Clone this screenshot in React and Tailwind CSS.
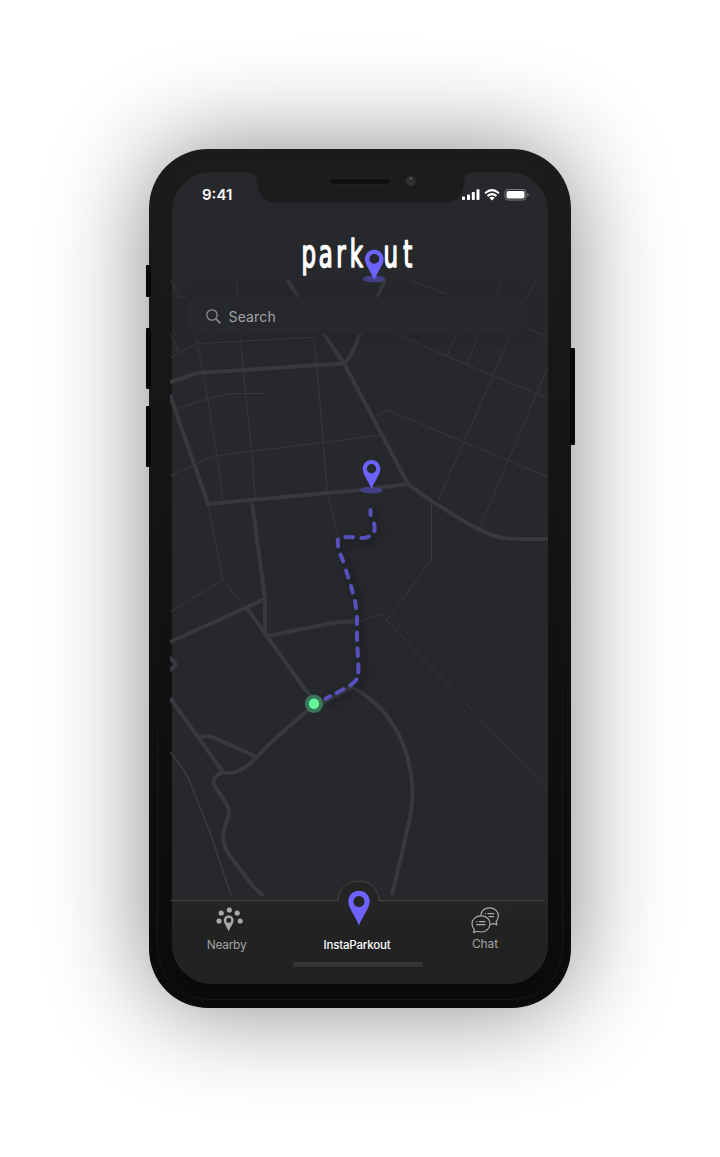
const thick = [
  "M170 382L198 373L344 363.5",
  "M287 280L344 363.5L408 484Q426 498 442 507.5Q484 535 503 538Q510 539 548 539",
  "M385 280L360 334C354 349 351 358 344 363.5",
  "M170 395L208 504L360 490L408 484",
  "M252 503L265 598V635",
  "M170 642L265 599",
  "M246 607L267 636L301 684Q308 693 313 699",
  "M267 636L327 624Q342 621 357 621.5",
  "M168 656L175 663Q176 665 174 667L168 671",
  "M170 698L223 772C232 776 244 770 257 757C271 741 287 728 307 711L351 688",
  "M200 737.5C206 735.500 212 736 217 739L257 757",
  "M223 772C214 776 211 781 216 788L226 803Q230 809 229 815C225 826 222 832 224 843Q225 850 233 860L253 886L263 896",
  "M348 685C387 704 412 742 412.5 795Q412 809 408 827L392 895",
];
const thin = [
  "M170 278L179 297H185",
  "M170 334L179 352",
  "M170 358L197 343.500L320 337",
  "M195 334L203 371L217 455L223 502",
  "M236.500 280L238 297L243 369L252 452L255 499",
  "M313 337L317 366L327 490L338 537",
  "M177 409Q220 392 244 393.500L264 393.500",
  "M170 476L214 456L360 438L380 435",
  "M412 281L454 297",
  "M397 334L447 356.500L548 398.500",
  "M502 281L495 297M535 281L526 301",
  "M456 334L447 356.500M479 334L466.500 364.500",
  "M511 334L438 501",
  "M548 367L480 527",
  "M528 329L548 337",
  "M375 417L387 410L548 477",
  "M431.500 503V560L387 620",
  "M357 622L381 614L450 687L548 790",
  "M208 505L223 580L245 608M223 580L170 612",
];

function Map() {
  return (
    <svg
      className="absolute top-[108px] -left-0.5"
      width="378"
      height="616"
      viewBox="170 280 378 616"
      fill="none"
    >
      <g stroke="#37383c" strokeWidth="1">
        {thin.map((d) => (
          <path key={d} d={d} />
        ))}
      </g>
      <path
        d="M170 752C182 766 190 779 193 790C201 809 210 832 216 850L231 895"
        stroke="#38393d"
        strokeWidth="1.8"
      />
      <g stroke="#38393d" strokeWidth="4" strokeLinejoin="round">
        {thick.map((d) => (
          <path key={d} d={d} />
        ))}
      </g>
      <path
        d="M370.500 510V515M374 523.500Q375.300 528 374.300 531M369 536.500Q365 538.300 361.500 538M353 537.200L345.500 537M338 539.500Q337.300 543 338.200 546.500M340.500 554.500L343.200 561.500M346 570.500L348.300 577.500M351 586L352.700 592.500M355 601L356 608M357 617V624M357 632.500V640M357.500 648.500L357.800 656M358.300 664.500V672.500M356.500 679.500Q353.500 683 350.500 685.300M343.500 689.300L336.500 693M330 696.300L325.500 698.700"
        stroke="#5750bd"
        strokeWidth="4"
        strokeLinecap="round"
        className="drop-shadow-[4px_4px_4px_rgba(0,0,0,0.45)]"
      />
      <circle cx="314" cy="703.700" r="9.200" fill="#39765a" />
      <circle cx="314" cy="703.700" r="5.200" fill="#61f797" />
      <ellipse cx="371.300" cy="490.200" rx="11.300" ry="3.300" fill="#453f87" />
      <path
        fill="#6c63ff"
        fillRule="evenodd"
        d="M371.500 460c-5 0-8.800 4-8.800 8.800 0 6 5.800 12.200 8.800 20.200 3-8 8.800-14.200 8.800-20.200 0-4.800-3.900-8.800-8.800-8.800Zm0 4a4.700 4.700 0 1 1 0 9.400 4.700 4.700 0 0 1 0-9.400Z"
      />
    </svg>
  );
}

function Notch() {
  return (
    <svg className="absolute -top-px left-[70px]" width="236" height="32" viewBox="242 171 236 32">
      <path
        fill="#1c1c1c"
        d="M242 171V172.500H249Q256 172.500 256.500 179C258 193 262 202.500 276 202.500H445C459 202.500 463 193 464.500 179Q465 172.500 472 172.500H478V171Z"
      />
      <rect x="329.500" y="178.500" width="61" height="6" rx="3" fill="#101010" stroke="#222" />
      <circle cx="410.800" cy="181.300" r="6.500" fill="#262626" stroke="#141414" />
      <circle cx="410.800" cy="181" r="4" fill="#333" />
      <circle cx="410.800" cy="178" r="1" fill="#686868" />
    </svg>
  );
}

function StatusIcons() {
  return (
    <svg width="68" height="14" viewBox="461 188 68 14" fill="#fff">
      <rect x="462" y="196.500" width="3" height="3.500" rx=".8" />
      <rect x="467" y="194.500" width="3" height="5.500" rx=".8" />
      <rect x="471.800" y="192" width="3" height="8" rx=".8" />
      <rect x="476.500" y="189.200" width="3" height="10.800" rx=".8" />
      <g fill="none" stroke="#fff" strokeWidth="2">
        <path d="M485 193.200Q492 187 499 193.200" />
        <path d="M487.500 196Q492 192.200 496.500 196" />
      </g>
      <path d="M489.300 197.700Q492 195.700 494.700 197.700L492 200.500Z" />
      <rect x="505" y="189.500" width="21" height="10.500" rx="3" fill="none" stroke="#77787a" />
      <rect x="506.500" y="191" width="18" height="7.500" rx="1.800" />
      <path d="M527.300 193v3.600q1.500-.6 1.500-1.800t-1.500-1.800Z" fill="#77787a" />
    </svg>
  );
}

function Logo() {
  return (
    <svg className="-mt-3 ml-[121px]" width="130" height="62" viewBox="293 222 130 62">
      <g
        fill="#fff"
        stroke="#fff"
        strokeWidth="1.700"
        strokeLinejoin="round"
        fontFamily="DejaVu Sans, sans-serif"
        fontSize="37"
      >
        <text transform="translate(301.500 267) scale(.62 1)" x="0 28 56 78">park</text>
        <text transform="translate(383.500 267) scale(.62 1)" x="0 32">ut</text>
      </g>
      <ellipse cx="374" cy="279" rx="11.300" ry="3.500" fill="#453f87" />
      <path
        fill="#6c63ff"
        fillRule="evenodd"
        d="M374.300 249.800c-5.200 0-9.300 4.200-9.300 9.300 0 6 6.300 13 9.300 21 3-8 9.300-15 9.300-21 0-5.100-4.100-9.300-9.300-9.300Zm0 4.200a4.900 4.900 0 1 1 0 9.800 4.900 4.900 0 0 1 0-9.800Z"
      />
    </svg>
  );
}

function SearchField() {
  return (
    <div className="relative ml-[14px] mt-[13px] flex h-[37px] w-[342px] items-center rounded-[10px] bg-[#27282c] pl-5 pt-0.5 shadow-[0_0_14px_rgba(30,31,34,0.55)]">
      <svg width="16" height="16" viewBox="0 0 16 16" fill="none" stroke="#8a8b8d" strokeWidth="1.300">
        <circle cx="6" cy="6" r="5.200" />
        <path d="M9.700 9.700l4.600 4.600" strokeWidth="1.700" />
      </svg>
      <span className="ml-[6.500px] font-['Inter',sans-serif] text-[14px] tracking-[0.15px] text-[#a2a3a5]">Search</span>
    </div>
  );
}

function NearbyIcon() {
  return (
    <svg width="28" height="26" viewBox="0 0 28 26" fill="#a9a9a9">
      <circle cx="3" cy="14" r="2.600" />
      <circle cx="5.200" cy="6" r="2.600" />
      <circle cx="13.300" cy="3" r="2.600" />
      <circle cx="21.200" cy="6" r="2.600" />
      <circle cx="24.200" cy="14" r="2.600" />
      <path
        fillRule="evenodd"
        d="M12.700 8.400c-2.800 0-4.900 2.200-4.900 4.900 0 3.400 3.200 6.600 4.900 11.200 1.700-4.600 4.900-7.800 4.900-11.200 0-2.700-2.100-4.900-4.900-4.900Zm0 2.300a2.500 2.500 0 1 1 0 5 2.500 2.500 0 0 1 0-5Z"
      />
    </svg>
  );
}

function ChatIcon() {
  return (
    <svg width="28" height="27" viewBox="0 0 28 27" fill="none" stroke="#a9a9a9" strokeWidth="1.200" strokeLinejoin="round">
      <path d="M9.700 8.300C10.500 3.600 14 .8 18.500 .8c5 0 8.800 3.400 8.800 8 0 2.600-1 4.500-2.200 5.700l.8 3.400-3.400-1.300-3.300.7" />
      <path d="M10 8.800c-5 0-9 3.500-9 8 0 2.400 1 4.300 2.300 5.700L2.500 25.600l3.600-1.300c1.300.5 2.500.7 3.900.7 5 0 9-3.600 9-8.200s-4-8-9-8Z" />
      <path d="M5.300 14.700h1.200m1.500 0h6.500m-9.200 3h9.200M14 6.700h1m1.500 0h6.500m-5.500 3h5.500" />
    </svg>
  );
}

function TabBar() {
  return (
    <nav className="relative h-[84px] rounded-b-[40px] bg-linear-to-b from-[#262626] via-[#222] via-30% to-[#212223] font-['Inter',sans-serif] text-[12px] leading-[14px] text-[#a3a3a3]">
      <svg className="absolute -top-5 -left-0.5" width="375" height="22" viewBox="170 880 375 22">
        <path d="M338 902V900.500C339 874.500 378 874.500 379 900.500V902Z" fill="#242424" />
        <path d="M170 900.500H338C339 874.500 378 874.500 379 900.500H545" fill="none" stroke="#444545" />
      </svg>
      <div className="relative flex pt-[7px]">
        <div className="flex w-[109px] flex-col items-center">
          <div className="pl-[7px]">
            <NearbyIcon />
          </div>
          <span className="mt-[5px] tracking-[-0.3px]">Nearby</span>
        </div>
        <div className="-mt-[17px] flex w-[152px] flex-col items-center">
          <svg className="ml-[3px]" width="22" height="36" viewBox="0 0 22 36">
            <path
              fill="#6c63ff"
              fillRule="evenodd"
              d="M11 .8C5 .8.300 5.600.300 11.300c0 7 7.200 14.500 10.700 24.500 3.500-10 10.700-17.500 10.700-24.500C21.700 5.600 17 .800 11 .800Zm0 5.200a5.500 5.500 0 1 1 0 11 5.500 5.500 0 0 1 0-11Z"
            />
          </svg>
          <span className="mt-3 text-[11.500px] font-medium tracking-[-0.2px] text-white">InstaParkout</span>
        </div>
        <div className="flex w-[104px] flex-col items-center">
          <ChatIcon />
          <span className="mt-[3px] tracking-[-0.1px]">Chat</span>
        </div>
      </div>
      <div className="absolute bottom-[17.500px] left-[120.500px] h-[5px] w-[130px] rounded-full bg-[#353535]" />
    </nav>
  );
}

export default function App() {
  return (
    <main className="flex h-[1157px] w-[720px] justify-center overflow-hidden bg-white pt-[149px]">
      <div className="relative h-[859px] w-[422px] rounded-[59px] bg-linear-to-b from-[#1c1c1c] to-[#0a0a0a] p-[23px] shadow-[0_0_100px_rgba(0,0,0,0.48)]">
        <div className="absolute -left-[3px] top-[116px] h-8 w-[5px] rounded-l-[1px] bg-[#080808]" />
        <div className="absolute -left-[3px] top-[179px] h-[61px] w-[5px] rounded-l-[1px] bg-[#080808]" />
        <div className="absolute -left-[3px] top-[257px] h-[61px] w-[5px] rounded-l-[1px] bg-[#080808]" />
        <div className="absolute -right-1 top-[199px] h-[97px] w-[5px] rounded-r-[1px] bg-[#080808]" />
        <div className="absolute inset-[8px] rounded-[51px] border-[1.500px] border-[#171717]" />
        <div className="relative flex h-[812px] w-[375.500px] flex-col rounded-[40px] bg-[#27282c]">
          <Map />
          <Notch />
          <header className="relative flex h-[62px] items-start justify-between pl-[30px] pr-[19px] pt-4">
            <span className="font-['Inter',sans-serif] text-[15px] font-semibold leading-[14px] text-white">9:41</span>
            <StatusIcons />
          </header>
          <Logo />
          <SearchField />
          <div className="flex-1" />
          <TabBar />
        </div>
      </div>
    </main>
  );
}
